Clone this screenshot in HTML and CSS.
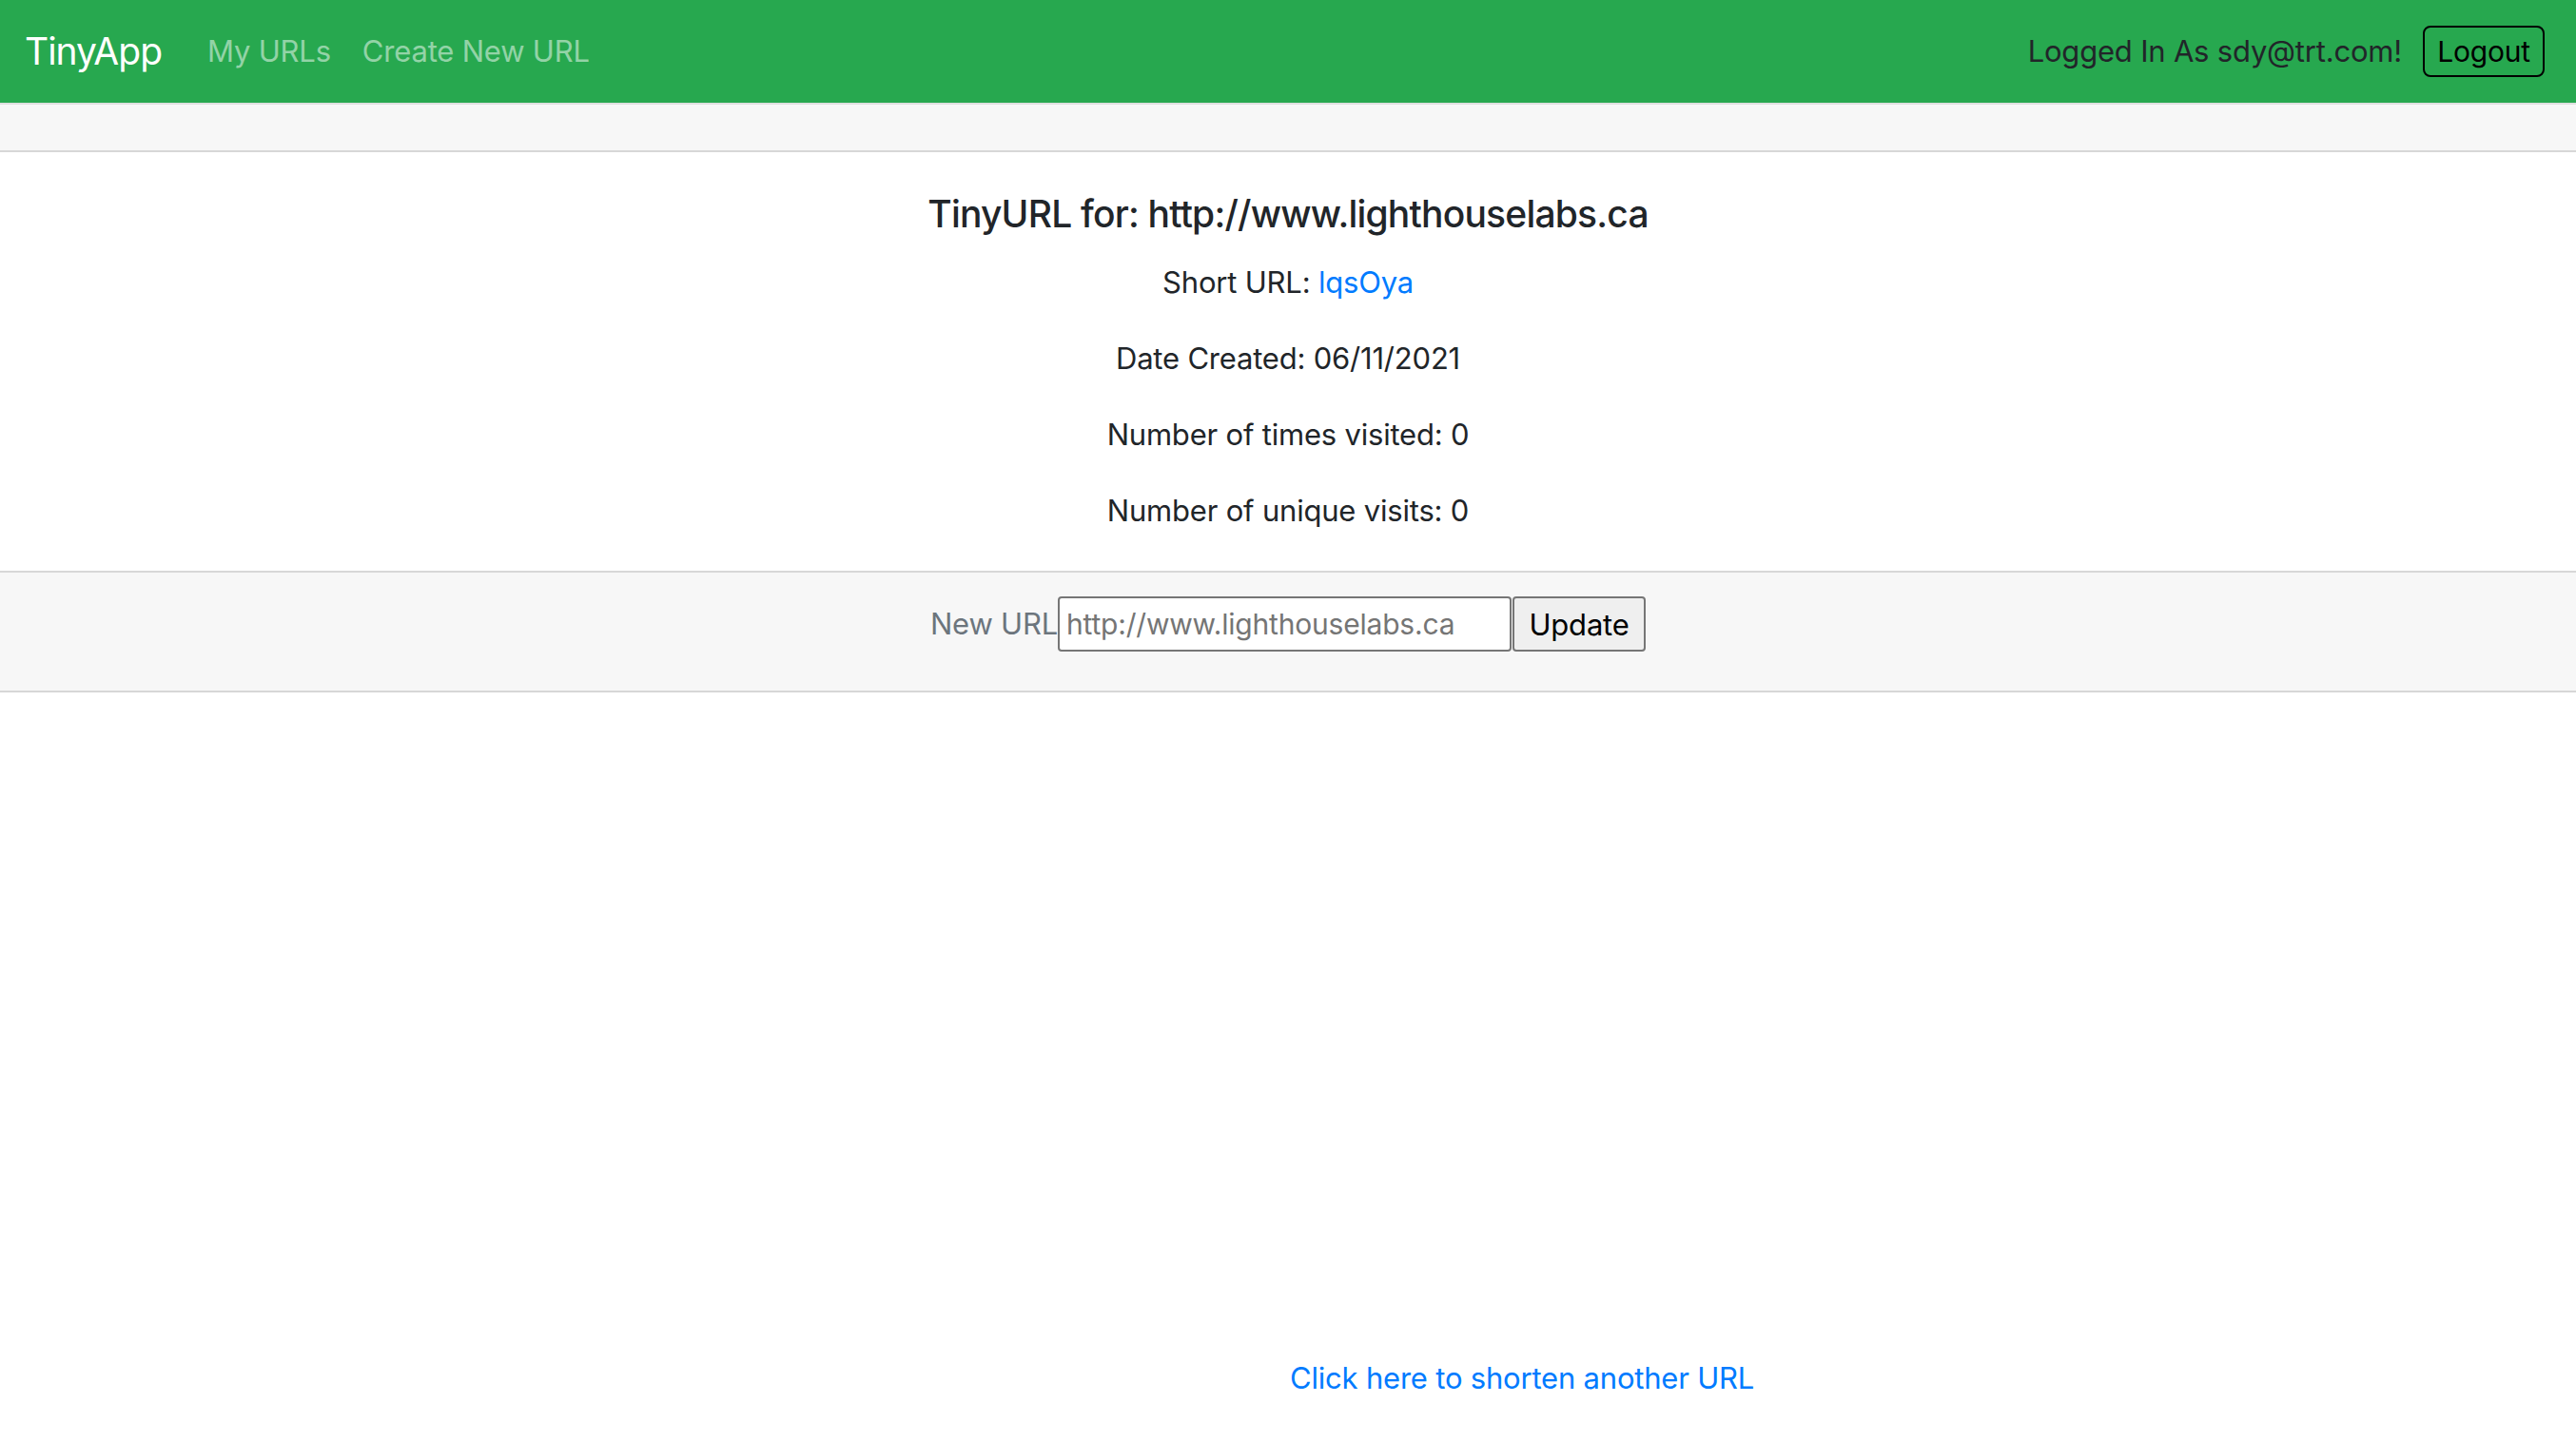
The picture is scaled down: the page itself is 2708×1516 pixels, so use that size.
FILE: index.html
```html
<!DOCTYPE html>
<html lang="en">
<head>
<meta charset="utf-8">
<title>TinyApp</title>
<link rel="stylesheet" href="styles.css">
</head>
<body>
<nav class="navbar">
  <div class="nav-left">
    <a class="brand" href="#">TinyApp</a>
    <a class="nav-link" href="#">My URLs</a>
    <a class="nav-link" href="#">Create New URL</a>
  </div>
  <div class="nav-right">
    <span class="nav-text">Logged In As sdy@trt.com!</span>
    <button class="logout">Logout</button>
  </div>
</nav>
<div class="card">
  <div class="card-header"></div>
  <div class="card-body">
    <h5 class="card-title">TinyURL for: http://www.lighthouselabs.ca</h5>
    <p class="card-text">Short URL: <a class="link" href="#">lqsOya</a></p>
    <p class="card-text">Date Created: 06/11/2021</p>
    <p class="card-text">Number of times visited: 0</p>
    <p class="card-text">Number of unique visits: 0</p>
  </div>
  <div class="card-footer">
    <form class="update-form">
      <label class="form-label" for="longURL">New URL</label>
      <input class="url-input" id="longURL" type="text" placeholder="http://www.lighthouselabs.ca">
      <button class="update-btn" type="button">Update</button>
    </form>
  </div>
</div>
<div class="more">
  <a class="link" href="#">Click here to shorten another URL</a>
</div>
</body>
</html>
```
FILE: styles.css
```css
* { box-sizing: border-box; }
html, body { margin: 0; padding: 0; }
body {
  font-family: Inter, "Noto Sans", sans-serif;
  font-size: 31px;
  line-height: 48px;
  letter-spacing: -0.2px;
  color: #212529;
  background: #fff;
}
a { text-decoration: none; }
.navbar {
  height: 108px;
  background: #27a84f;
  display: flex;
  align-items: center;
  justify-content: space-between;
  padding: 0 33px 0 26px;
}
.nav-left { display: flex; align-items: center; }
.brand {
  color: #fff;
  font-size: 39px;
  line-height: 60px;
  letter-spacing: -1px;
  margin-right: 48px;
}
.nav-link {
  color: rgba(255,255,255,.5);
  margin-right: 33px;
}
.nav-right { display: flex; align-items: center; }
.nav-text { color: #212529; margin-right: 22px; }
.logout {
  font-family: inherit;
  font-size: 30px;
  letter-spacing: -0.2px;
  line-height: 1;
  color: #000;
  background: transparent;
  border: 2px solid #000;
  border-radius: 8px;
  height: 54px;
  width: 128px;
  padding: 0;
}
.card {
  border-top: 2px solid #dfdfdf;
  border-bottom: 2px solid #d7d7d7;
}
.card-header {
  height: 50px;
  background: #f7f7f7;
  border-bottom: 2px solid #d7d7d7;
}
.card-body {
  padding: 41px 40px 39px;
  text-align: center;
}
.card-title {
  margin: 0 0 24px;
  font-size: 39px;
  line-height: 48px;
  font-weight: 500;
  letter-spacing: -0.8px;
}
.card-text { margin: 0 0 32px; }
.card-text:last-child { margin-bottom: 0; }
.link { color: #007bff; }
.card-footer {
  background: #f7f7f7;
  border-top: 2px solid #d7d7d7;
  padding: 25px 40px 41px;
}
.update-form {
  display: flex;
  justify-content: center;
  align-items: center;
  margin: 0;
}
.form-label {
  color: #6c757d;
  font-size: 31px;
}
.url-input {
  width: 477px;
  height: 58px;
  border: 2px solid #767676;
  border-radius: 4px;
  background: #fff;
  padding: 0 7px;
  font-family: inherit;
  font-size: 30px;
  letter-spacing: -0.2px;
  color: #757575;
}
.url-input::placeholder { color: #757575; opacity: 1; }
.update-btn {
  margin-left: 1px;
  width: 140px;
  height: 58px;
  border: 2px solid #767676;
  border-radius: 4px;
  background: #efefef;
  font-family: inherit;
  font-size: 31px;
  letter-spacing: -0.2px;
  color: #000;
  padding: 0;
}
.more {
  margin-top: 697px;
  padding-left: calc(50% + 2px);
}
```
